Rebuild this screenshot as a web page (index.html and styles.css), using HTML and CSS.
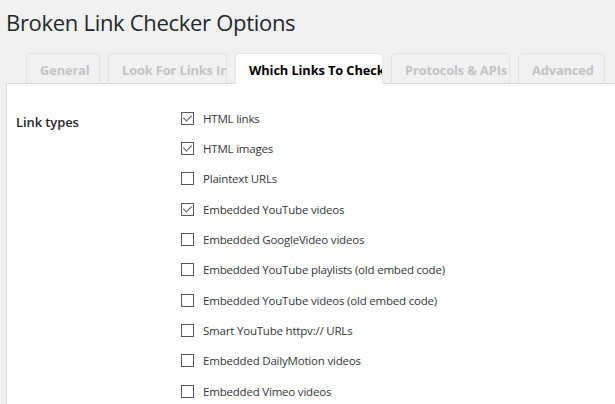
FILE: index.html
```html
<!DOCTYPE html>
<html>
<head>
<meta charset="utf-8">
<link rel="stylesheet" href="styles.css">
</head>
<body>
<div class="wrap">
  <h1 class="title">Broken Link Checker Options</h1>
  <div class="tabs">
    <div class="tab w1">General</div>
    <div class="tab w2">Look For Links In</div>
    <div class="tab w3 active">Which Links To Check</div>
    <div class="tab w2">Protocols &amp; APIs</div>
    <div class="tab w5">Advanced</div>
  </div>
  <div class="panel">
    <div class="label">Link types</div>
    <div class="options">
      <label class="opt"><span class="cb checked"></span>HTML links</label>
      <label class="opt"><span class="cb checked"></span>HTML images</label>
      <label class="opt"><span class="cb"></span>Plaintext URLs</label>
      <label class="opt"><span class="cb checked"></span>Embedded YouTube videos</label>
      <label class="opt"><span class="cb"></span>Embedded GoogleVideo videos</label>
      <label class="opt"><span class="cb"></span>Embedded YouTube playlists (old embed code)</label>
      <label class="opt"><span class="cb"></span>Embedded YouTube videos (old embed code)</label>
      <label class="opt"><span class="cb"></span>Smart YouTube httpv:// URLs</label>
      <label class="opt"><span class="cb"></span>Embedded DailyMotion videos</label>
      <label class="opt"><span class="cb"></span>Embedded Vimeo videos</label>
    </div>
  </div>
</div>
</body>
</html>
```
FILE: styles.css
```css
html, body {
  margin: 0;
  padding: 0;
  background: #f1f1f1;
  overflow: hidden;
}
.wrap {
  width: 615px;
  height: 404px;
  overflow: hidden;
  padding-left: 6px;
  box-sizing: border-box;
  font-family: "Open Sans", "Noto Sans", sans-serif;
  color: #23282d;
}
.title {
  margin: 0;
  padding-top: 8px;
  height: 53px;
  box-sizing: border-box;
  font-weight: 400;
  font-size: 22px;
  line-height: 28px;
  letter-spacing: -0.3px;
  color: #23282d;
}
.tabs {
  display: flex;
  gap: 8px;
  padding-left: 20px;
  height: 30px;
  align-items: flex-end;
}
.tab {
  box-sizing: border-box;
  height: 30px;
  border: 1px solid #e2e2e2;
  border-bottom: none;
  border-radius: 5px 5px 0 0;
  background: #f1f1f1;
  color: #c3c3c3;
  font-weight: 700;
  font-size: 12.8px;
  line-height: 32px;
  padding-left: 13px;
  white-space: nowrap;
  overflow: hidden;
  letter-spacing: -0.1px;
}
.w1 { width: 74px; }
.w2 { width: 119px; }
.w3 { width: 148px; }
.w5 { width: 87px; }
.tab.active {
  background: #fff;
  color: #000;
  border-color: #e6e6e6;
  height: 31px;
  margin-bottom: -1px;
  position: relative;
  z-index: 1;
}
.panel {
  background: #fff;
  border-top: 1px solid #dcdcdc;
  border-left: 1px solid #dcdcdc;
  display: flex;
  padding-top: 19px;
  height: 330px;
}
.label {
  width: 165px;
  padding-left: 9px;
  padding-top: 10px;
  font-size: 13px;
  font-weight: 600;
  color: #23282d;
  letter-spacing: -0.1px;
  box-sizing: border-box;
  width: 174px;
}
.options {
  display: flex;
  flex-direction: column;
}
.opt {
  display: flex;
  align-items: center;
  height: 30.33px;
  font-size: 11.5px;
  color: #32373c;
  letter-spacing: -0.2px;
}
.cb {
  width: 13px;
  height: 13px;
  box-sizing: border-box;
  border: 1px solid #5a5a5a;
  margin-right: 9px;
  position: relative;
  flex: none;
}
.cb.checked::after {
  content: "";
  position: absolute;
  left: 3px;
  top: 0px;
  width: 5px;
  height: 8px;
  border-right: 1.5px solid #555;
  border-bottom: 1.5px solid #555;
  transform: rotate(45deg);
  transform-origin: center;
  box-sizing: border-box;
}
```
